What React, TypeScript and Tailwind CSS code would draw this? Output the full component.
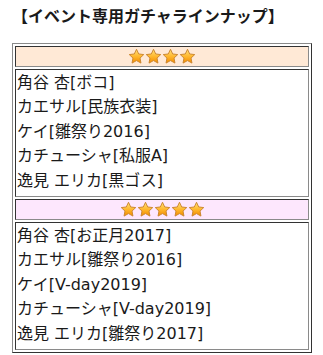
import React from 'react';

const groups = [
  {
    stars: 4,
    bg: 'bg-[#ffe9d6]',
    names: ['角谷 杏[ボコ]', 'カエサル[民族衣装]', 'ケイ[雛祭り2016]', 'カチューシャ[私服A]', '逸見 エリカ[黒ゴス]'],
  },
  {
    stars: 5,
    bg: 'bg-[#fde7fd]',
    names: ['角谷 杏[お正月2017]', 'カエサル[雛祭り2016]', 'ケイ[V-day2019]', 'カチューシャ[V-day2019]', '逸見 エリカ[雛祭り2017]'],
  },
];

function Star() {
  return (
    <svg width="17" height="17" viewBox="0 0 24 24" className="block">
      <defs>
        <linearGradient id="starFill" x1="0" y1="0" x2="0" y2="1">
          <stop offset="0" stopColor="#ffe37a" />
          <stop offset="0.55" stopColor="#ffb52a" />
          <stop offset="1" stopColor="#f08a00" />
        </linearGradient>
      </defs>
      <path
        d="M12 1.8l3.1 6.6 7.1.9-5.2 4.9 1.3 7.1L12 17.8l-6.3 3.5 1.3-7.1-5.2-4.9 7.1-.9z"
        fill="url(#starFill)"
        stroke="#c9822a"
        strokeWidth="1.3"
        strokeLinejoin="round"
      />
    </svg>
  );
}

export default function App() {
  return (
    <div className="w-[323px] h-[355px] bg-white text-[#1a1a1a] font-['Noto_Sans_CJK_JP',sans-serif] overflow-hidden">
      {/* タイトル */}
      <h2 className="pl-[12px] pt-[3px] h-[43px] text-[16px] leading-[24px] font-bold">
        【イベント専用ガチャラインナップ】
      </h2>

      {/* ラインナップ表 */}
      <div className="ml-[12px] w-[300px] flex flex-col gap-[2px] p-[2px] border border-t-[#8a8a8a] border-l-[#8a8a8a] border-b-[#333] border-r-[#333]">
        {groups.map((g, i) => (
          <React.Fragment key={i}>
            <div className={`${g.bg} h-[21px] flex items-center justify-center border border-t-[#333] border-l-[#333] border-b-[#8a8a8a] border-r-[#8a8a8a]`}>
              {Array.from({ length: g.stars }).map((_, j) => (
                <Star key={j} />
              ))}
            </div>
            <div className="px-[1px] pt-[1px] pb-[3px] text-[16px] leading-[24.4px] font-['DejaVu_Sans','Noto_Sans_CJK_JP',sans-serif] border border-t-[#333] border-l-[#333] border-b-[#8a8a8a] border-r-[#8a8a8a]">
              {g.names.map((n) => (
                <div key={n}>{n}</div>
              ))}
            </div>
          </React.Fragment>
        ))}
      </div>
    </div>
  );
}
